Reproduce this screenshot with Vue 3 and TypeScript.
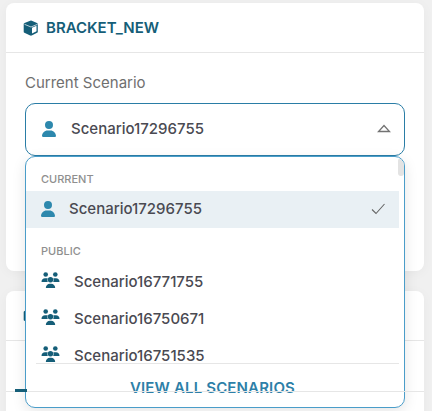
<script setup lang="ts">
const publicScenarios: string[] = ['Scenario16771755', 'Scenario16750671', 'Scenario16751535']
</script>

<template>
  <div class="page">
    <section class="card top-card">
      <header class="card-head">
        <svg class="cube" viewBox="0 0 16 16" width="16" height="16">
          <path class="cube-body" d="M7.200.700 1.500 3a1.200 1.200 0 0 0-.8 1.100v7.600c0 .5.300.9.700 1.100l5.800 2.700c.5.200 1 .2 1.500 0l5.400-2.700c.4-.2.700-.6.700-1.100V4.100c0-.5-.3-.9-.8-1.100L8.800.700a2 2 0 0 0-1.600 0z" />
          <path class="cube-face" d="M9 7.800l4.500-2v5.500L9 13.500z" />
          <path class="cube-edge" d="M1.500 4.300 8 7l6.500-2.700" />
        </svg>
        <span class="title">BRACKET_NEW</span>
      </header>
      <div class="card-body">
        <div class="label">Current Scenario</div>
        <div class="select-wrap">
          <div class="select">
            <svg class="person" viewBox="0 0 448 512" width="14" height="16">
              <path d="M224 256a128 128 0 1 0 0-256 128 128 0 1 0 0 256zm-45.700 48C79.800 304 0 383.800 0 482.300 0 498.700 13.300 512 29.700 512h388.600c16.400 0 29.700-13.300 29.700-29.700 0-98.500-79.800-178.300-178.300-178.300h-91.400z" />
            </svg>
            <span class="select-value">Scenario17296755</span>
            <svg class="caret" viewBox="0 0 14 10" width="14" height="10">
              <path d="M1.500 7.500h11L7 1.500z" />
            </svg>
          </div>

          <div class="menu">
            <div class="menu-scroll">
              <div class="thumb"></div>
              <div class="group-label">CURRENT</div>
              <div class="option option-current">
                <svg class="person" viewBox="0 0 448 512" width="14" height="16">
                  <path d="M224 256a128 128 0 1 0 0-256 128 128 0 1 0 0 256zm-45.700 48C79.800 304 0 383.800 0 482.300 0 498.700 13.300 512 29.700 512h388.600c16.400 0 29.700-13.300 29.700-29.700 0-98.500-79.800-178.300-178.300-178.300h-91.400z" />
                </svg>
                <span class="option-name">Scenario17296755</span>
                <svg class="check" viewBox="0 0 14 12" width="14" height="12">
                  <path d="M1 6.500l4 4L13.500 1" />
                </svg>
              </div>
              <div class="group-label group-public">PUBLIC</div>
              <div v-for="name in publicScenarios" :key="name" class="option option-public">
                <svg class="users" viewBox="0 0 19 16" width="19" height="16">
                  <circle cx="4.700" cy="2.500" r="2.300" />
                  <circle cx="14.300" cy="2.500" r="2.300" />
                  <circle cx="9.500" cy="7.800" r="2.700" />
                  <path d="M.5 10c0-2.500 1.500-3.700 3.500-3.700h1.500c.5 0 1 .1 1.300.2-.3.500-.4 1.100-.4 1.700 0 .7.200 1.300.5 1.800z" />
                  <path d="M18.500 10c0-2.500-1.500-3.700-3.500-3.700h-1.500c-.5 0-1 .1-1.300.2.300.5.400 1.100.4 1.700 0 .7-.2 1.300-.5 1.800z" />
                  <path d="M4.800 16c0-2.600 1.900-4.300 4-4.300h1.400c2.100 0 4 1.700 4 4.300z" />
                </svg>
                <span class="option-name">{{ name }}</span>
              </div>
            </div>
            <div class="menu-foot">VIEW ALL SCENARIOS</div>
          </div>
        </div>
      </div>
    </section>

    <section class="card lower-card">
      <div class="lower-head">
        <svg class="cube" viewBox="0 0 16 16" width="16" height="16">
          <path class="cube-body" d="M7.200.700 1.500 3a1.200 1.200 0 0 0-.8 1.100v7.600c0 .5.300.9.700 1.100l5.800 2.700c.5.200 1 .2 1.500 0l5.400-2.700c.4-.2.700-.6.700-1.100V4.100c0-.5-.3-.9-.8-1.100L8.800.700a2 2 0 0 0-1.600 0z" />
        </svg>
      </div>
      <div class="lower-tabs"><span class="tab-mark"></span></div>
    </section>
  </div>
</template>

<style>
  html,
  body {
    margin: 0;
    background: #f0f0f0;
  }
</style>

<style scoped>
  .page {
    width: 432px;
    height: 411px;
    box-sizing: border-box;
    padding: 3px 8px 0 6px;
    overflow: hidden;
    font-family: Inter, 'Liberation Sans', sans-serif;
    display: flex;
    flex-direction: column;
    gap: 20px;
  }

  .card {
    background: #fff;
    border-radius: 8px;
    box-shadow: 0 2px 12px rgba(0, 0, 0, 0.04);
    flex-shrink: 0;
  }

  .top-card {
    height: 268px;
  }

  .card-head {
    height: 49px;
    display: flex;
    align-items: center;
    gap: 7px;
    padding-left: 17px;
    border-bottom: 1px solid #e6e6e6;
  }

  .cube-body {
    fill: #155e78;
  }

  .cube-face {
    fill: #fff;
  }

  .cube-edge {
    fill: none;
    stroke: #fff;
    stroke-width: 0.7;
  }

  .title {
    font-size: 15px;
    font-weight: 600;
    color: #155e78;
  }

  .card-body {
    padding: 21px 19px 0;
  }

  .label {
    font-size: 15px;
    line-height: 18px;
    color: #6f6f6f;
    margin-bottom: 11px;
  }

  .select-wrap {
    position: relative;
  }

  .select {
    height: 53px;
    box-sizing: border-box;
    border: 1px solid #2a7da6;
    border-radius: 10px;
    background: #fff;
    display: flex;
    align-items: center;
    padding: 0 13px 2px 16px;
  }

  .person {
    fill: #2d88ad;
    flex-shrink: 0;
  }

  .select-value {
    margin-left: 15px;
    flex: 1;
    font-size: 15px;
    font-weight: 500;
    color: #4a4a52;
  }

  .caret {
    fill: none;
    stroke: #737373;
    stroke-width: 1.3;
  }

  .menu {
    position: absolute;
    left: 0;
    right: 0;
    top: 53px;
    height: 252px;
    box-sizing: border-box;
    background: #fff;
    border: 1px solid #4a9dc9;
    border-radius: 10px;
    box-shadow: 0 4px 14px rgba(0, 0, 0, 0.1);
    display: flex;
    flex-direction: column;
    overflow: hidden;
  }

  .menu-scroll {
    position: relative;
    height: 206px;
    overflow: hidden;
    padding-right: 5px;
    flex-shrink: 0;
  }

  .thumb {
    position: absolute;
    top: 1px;
    right: 0;
    width: 6px;
    height: 18px;
    border-radius: 3px;
    background: #e3e3e3;
  }

  .group-label {
    font-size: 11px;
    line-height: 14px;
    font-weight: 500;
    color: #8f8f8f;
    padding: 15px 0 5px 15px;
  }

  .group-public {
    padding-top: 16px;
    padding-bottom: 5px;
  }

  .option {
    display: flex;
    align-items: center;
  }

  .option-current {
    height: 37px;
    background: #e9f0f4;
    padding: 0 14px 2px 15px;
    box-sizing: border-box;
  }

  .option-public {
    height: 37px;
    padding-left: 15px;
  }

  .option-name {
    flex: 1;
    font-size: 15px;
    font-weight: 500;
    color: #4a4a52;
    margin-left: 14px;
  }

  .users {
    fill: #155e78;
    flex-shrink: 0;
    margin-bottom: 3px;
  }

  .check {
    fill: none;
    stroke: #666;
    stroke-width: 1.1;
  }

  .menu-foot {
    margin: 0 5px 0 10px;
    flex: 1;
    border-top: 1px solid #e6e6e6;
    display: flex;
    align-items: center;
    justify-content: center;
    padding: 3px 10px 0 0;
    font-size: 15px;
    font-weight: 600;
    letter-spacing: 0.15px;
    color: #2d7fa8;
  }

  .lower-card {
    height: 200px;
  }

  .lower-head {
    height: 49px;
    border-bottom: 1px solid #e6e6e6;
    display: flex;
    align-items: center;
    padding-left: 17px;
  }

  .lower-tabs {
    height: 50px;
    border-bottom: 1px solid #e6e6e6;
    position: relative;
  }

  .tab-mark {
    position: absolute;
    left: 9px;
    bottom: -1px;
    width: 12px;
    height: 3px;
    background: #155e78;
  }
</style>
